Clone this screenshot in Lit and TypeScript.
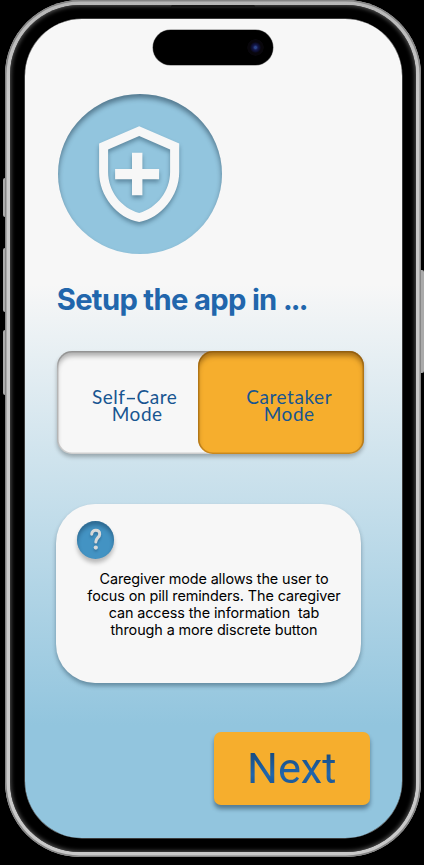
import { LitElement, html, css, svg } from "lit";
import { customElement, property } from "lit/decorators.js";

@customElement("shield-badge")
class ShieldBadge extends LitElement {
  static styles = css`
    :host { display: block; width: 164px; height: 160px; }
    .disc {
      width: 100%; height: 100%; border-radius: 50%; background: #92c5de;
      box-shadow: inset 0 4px 5px rgba(0, 20, 35, 0.42);
    }
    .icon { display: block; width: 164px; height: 160px; filter: drop-shadow(0 3px 2px rgba(0, 30, 50, 0.35)); }
  `;
  render() {
    return html`<div class="disc">
      <svg class="icon" viewBox="0 0 164 160">
        <path fill="#f7f7f7" fill-rule="evenodd"
          d="M81.2 32.3 L121.2 49.5 V78 C121.2 102 103 124 81.2 128 C59 124 41.1 102 41.1 78 V49.5 Z
             M81.2 42 L50.1 55.5 V78 C50.1 97 63 114 81.2 119 C99 114 112.1 97 112.1 78 V55.5 Z"/>
        <path fill="#f7f7f7" d="M74 58.7H84.4V75H101.1V85.3H84.4V101.3H74V85.3H57.1V75H74Z"/>
      </svg>
    </div>`;
  }
}

@customElement("mode-toggle")
class ModeToggle extends LitElement {
  static styles = css`
    :host { display: block; }
    .track {
      display: flex; justify-content: space-between; box-sizing: border-box;
      width: 307px; height: 103.5px; border-radius: 15px; background: #f7f7f7;
      box-shadow: 0 3px 4px rgba(0, 0, 0, 0.27), inset 0 5px 5px rgba(0, 0, 0, 0.3),
        inset 0 0 0 1.5px rgba(0, 0, 0, 0.16);
    }
    .option {
      box-sizing: border-box; padding-top: 37px; text-align: center;
      font: 400 19px/17.5px Lato, sans-serif; color: #175591; letter-spacing: 0.55px;
    }
    .self { flex: 1; padding-left: 20px; }
    .care {
      width: 166px; padding-left: 17px; border-radius: 15px; background: #f6ae2d;
      box-shadow: inset 0 5px 5px rgba(90, 50, 0, 0.5), inset 0 0 0 1.5px rgba(120, 70, 0, 0.35);
    }
    .first { margin-right: 5px; }
    .dash { display: inline-block; width: 11px; transform: scaleX(1.75); transform-origin: center; }
  `;
  render() {
    return html`<div class="track">
      <div class="option self"><span class="first">Self<span class="dash">-</span>Care</span><br />Mode</div>
      <div class="option care"><span>Caretaker</span><br />Mode</div>
    </div>`;
  }
}

@customElement("info-card")
class InfoCard extends LitElement {
  @property({ attribute: false }) lines: string[] = [];
  static styles = css`
    :host { display: block; }
    .card {
      box-sizing: border-box; width: 305px; height: 178.5px; padding: 17px 0 0 20.5px;
      border-radius: 39px; background: #f7f7f7; box-shadow: 0 3px 4px rgba(0, 30, 50, 0.36);
    }
    .help {
      width: 37.5px; height: 37.5px; border-radius: 50%; background: #4393c3;
      box-shadow: 0 4px 4px rgba(0, 0, 0, 0.25), inset 0 4px 4px rgba(0, 20, 40, 0.32);
    }
    .mark { display: block; width: 37.5px; height: 37.5px; filter: drop-shadow(0 2px 1px rgba(0, 20, 50, 0.25)); }
    .text {
      margin-top: 11px; width: 275px; text-align: center; white-space: pre;
      font: 400 14.4px/17.3px Inter, sans-serif; letter-spacing: -0.1px; color: #000;
    }
  `;
  render() {
    return html`<div class="card">
      <div class="help">
        <svg class="mark" viewBox="0 0 37.5 37.5">
          ${svg`<path d="M14.7 13.2C15 7.7 22.9 8 22.7 13.1C22.6 16.7 18.8 16.7 18.8 21" fill="none" stroke="#d9d9d9" stroke-width="3" stroke-linecap="round"/>
          <circle cx="18.8" cy="26.6" r="2.1" fill="#d9d9d9"/>`}
        </svg>
      </div>
      <div class="text">${this.lines.join("\n")}</div>
    </div>`;
  }
}

@customElement("app-root")
class AppRoot extends LitElement {
  static styles = css`
    :host { display: block; width: 424px; height: 865px; overflow: hidden; background: #000; }
    .stage { position: relative; box-sizing: border-box; height: 865px; padding-left: 5px; background: #000; }
    .frame {
      position: relative; box-sizing: border-box; width: 415.5px; height: 857px; padding: 5px;
      border-radius: 75px; background: linear-gradient(#b6b6b6, #c9c9c9 12%, #c9c9c9);
      box-shadow: inset 0 0 0 1.5px #858585;
    }
    .bezel {
      box-sizing: border-box; width: 405.5px; height: 847px; padding: 14px 14px 14px 14.5px;
      border-radius: 70px; background: #000; box-shadow: inset 0 0 4px 1px #555;
    }
    .screen {
      box-sizing: border-box; width: 377px; height: 819px; padding: 75px 0 0 33.5px;
      border-radius: 57px; display: flex; flex-direction: column; align-items: flex-start;
      background: linear-gradient(#f7f7f7 0 265px, #92c5de 706px);
      box-shadow: 0 0 0 0.5px #777;
    }
    .key { position: absolute; width: 4px; background: #aaa; border-radius: 2px 0 0 2px; }
    .action { left: 3px; top: 178px; height: 39px; }
    .up { left: 3px; top: 248px; height: 64px; }
    .down { left: 3px; top: 330px; height: 65px; }
    .power { left: 419.5px; top: 270px; height: 103px; border-radius: 0 2px 2px 0; }
    .island {
      position: absolute; left: 153px; top: 30px; width: 120px; height: 35px;
      border-radius: 18px; background: #000; box-shadow: 0 0 0 0.5px #777;
    }
    .lens {
      position: absolute; right: 9px; top: 9px; width: 17px; height: 17px; border-radius: 50%;
      background: radial-gradient(circle, #2c4488 0 1px, #14184c 2.5px, #0b0c28 4.5px, #08060b 5.5px 8px, #000 8.5px);
    }
    .speaker { position: absolute; left: 171px; top: 5px; width: 84px; height: 3px; border-radius: 2px; background: #171717; }
    .title {
      margin: 28.5px 0 0 -1.3px; font: 700 29.2px/34px Inter, sans-serif; letter-spacing: -0.67px;
      color: #2166ac; white-space: nowrap;
    }
    .dots { letter-spacing: -1.8px; }
    .modes { margin: 34px 0 0 -1.3px; }
    .info { margin: 50px 0 0 -2px; }
    .next {
      margin: 49px 0 0 156px; box-sizing: border-box; width: 155.5px; height: 73px; padding: 0; border: 0;
      border-radius: 7px; background: #f6ae2d; box-shadow: 0 4px 4px rgba(0, 25, 45, 0.42);
      font: 400 43.3px/73px Roboto, sans-serif; text-align: center;
    }
    .label {
      background: linear-gradient(#174b80 18%, #2166ac 62%, #174b80); -webkit-background-clip: text;
      background-clip: text; color: transparent;
    }
  `;
  render() {
    return html`<div class="stage">
      <i class="key action"></i><i class="key up"></i><i class="key down"></i><i class="key power"></i>
      <div class="frame">
        <div class="bezel">
          <main class="screen">
            <shield-badge></shield-badge>
            <div class="title">Setup the app in <span class="dots">...</span></div>
            <mode-toggle class="modes"></mode-toggle>
            <info-card class="info" .lines=${[
              "Caregiver mode allows the user to",
              "focus on pill reminders. The caregiver",
              "can access the information  tab",
              "through a more discrete button",
            ]}></info-card>
            <button class="next"><span class="label">Next</span></button>
          </main>
        </div>
      </div>
      <div class="speaker"></div>
      <div class="island"><div class="lens"></div></div>
    </div>`;
  }
}
